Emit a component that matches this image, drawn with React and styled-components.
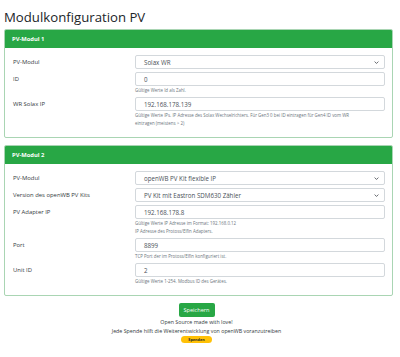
import React from "react";
import styled, { createGlobalStyle } from "styled-components";

const Global = createGlobalStyle`
	html, body {
		margin: 0;
		padding: 0;
		background: #fff;
	}
	body {
		font-family: "Open Sans", "Noto Sans", sans-serif;
		color: #212529;
	}
`;

const Page = styled.main`
	width: 389px;
	padding: 9px 0 0 4px;
`;
const Title = styled.h1`
	margin: 0 0 3px 0;
	font-size: 13.2px;
	font-weight: 500;
	line-height: 17px;
	color: #212529;
`;
const Card = styled.section`
	border: 1px solid #a9d5b3;
	border-radius: 2px;
	margin-bottom: 7px;
	overflow: hidden;
`;
const CardHeader = styled.header`
	background: #28a745;
	color: #fff;
	font-size: 5.8px;
	font-weight: 700;
	height: 18px;
	line-height: 18px;
	padding: 0 7px;
`;
const CardBody = styled.div`
	padding: 7px 7px 7px 7px;
`;
const Row = styled.div`
	display: grid;
	grid-template-columns: 123px 1fr;
	margin-bottom: 3px;
`;
const Label = styled.label`
	font-size: 5.9px;
	line-height: 14px;
	padding-left: 1px;
	color: #343a40;
`;
const Field = styled.div`
	display: flex;
	flex-direction: column;
`;
const Box = styled.div`
	height: 14px;
	box-sizing: border-box;
	border: 1px solid #d3d8dc;
	border-radius: 2px;
	background: #fff;
	display: flex;
	align-items: center;
	justify-content: space-between;
	padding: 0 5px 0 8px;
	font-size: 6.2px;
	color: #495057;
`;
const Chevron = styled.svg`
	width: 5px;
	height: 5px;
`;
const Help = styled.small`
	margin-top: 1px;
	font-size: 4.4px;
	line-height: 7px;
	color: #6c757d;
`;
const Footer = styled.footer`
	display: flex;
	flex-direction: column;
	align-items: center;
	margin-left: -4px;
`;
const SaveButton = styled.button`
	width: 36px;
	height: 14px;
	padding: 0;
	border: none;
	border-radius: 2px;
	background: #28a745;
	color: #fff;
	font-family: inherit;
	font-size: 5.6px;
	margin-bottom: 1px;
`;
const Line = styled.div`
	font-size: 5.3px;
	line-height: 9px;
	color: #343a40;
`;
const Badge = styled.span`
	background: #ffc107;
	border-radius: 4px;
	padding: 0 7px;
	height: 7px;
	line-height: 7px;
	font-size: 3.8px;
	font-weight: 700;
	color: #212529;
`;

function Select({ value }) {
	return (
		<Box>
			<span>{value}</span>
			<Chevron viewBox="0 0 16 16">
				<path d="M2 5l6 6 6-6" fill="none" stroke="#343a40" strokeWidth="2.4" />
			</Chevron>
		</Box>
	);
}

function FormRow({ label, select, value, help }) {
	return (
		<Row>
			<Label>{label}</Label>
			<Field>
				{select ? <Select value={value} /> : <Box>{value}</Box>}
				{help && help.map((h) => <Help key={h}>{h}</Help>)}
			</Field>
		</Row>
	);
}

export default function App() {
	return (
		<>
			<Global />
			<Page>
				<Title>Modulkonfiguration PV</Title>
				<Card>
					<CardHeader>PV-Modul 1</CardHeader>
					<CardBody>
						<FormRow label="PV-Modul" select value="Solax WR" />
						<FormRow label="ID" value="0" help={["Gültige Werte Id als Zahl."]} />
						<FormRow
							label="WR Solax IP"
							value="192.168.178.139"
							help={[
								"Gültige Werte IPs. IP Adresse des Solax Wechselrichters. Für Gen3 0 bei ID eintragen für Gen4 ID vom WR",
								"eintragen (meistens > 2)",
							]}
						/>
					</CardBody>
				</Card>
				<Card>
					<CardHeader>PV-Modul 2</CardHeader>
					<CardBody>
						<FormRow label="PV-Modul" select value="openWB PV Kit flexible IP" />
						<FormRow label="Version des openWB PV Kits" select value="PV Kit mit Eastron SDM630 Zähler" />
						<FormRow
							label="PV Adapter IP"
							value="192.168.178.8"
							help={[
								"Gültige Werte IP Adresse im Format: 192.168.0.12",
								"IP Adresse des Protoss/Elfin Adapters.",
							]}
						/>
						<FormRow label="Port" value="8899" help={["TCP Port der im Protoss/Elfin konfiguriert ist."]} />
						<FormRow label="Unit ID" value="2" help={["Gültige Werte 1-254. Modbus ID des Gerätes."]} />
					</CardBody>
				</Card>
				<Footer>
					<SaveButton>Speichern</SaveButton>
					<Line>Open Source made with love!</Line>
					<Line>Jede Spende hilft die Weiterentwicklung von openWB voranzutreiben</Line>
					<Badge>Spenden</Badge>
				</Footer>
			</Page>
		</>
	);
}
